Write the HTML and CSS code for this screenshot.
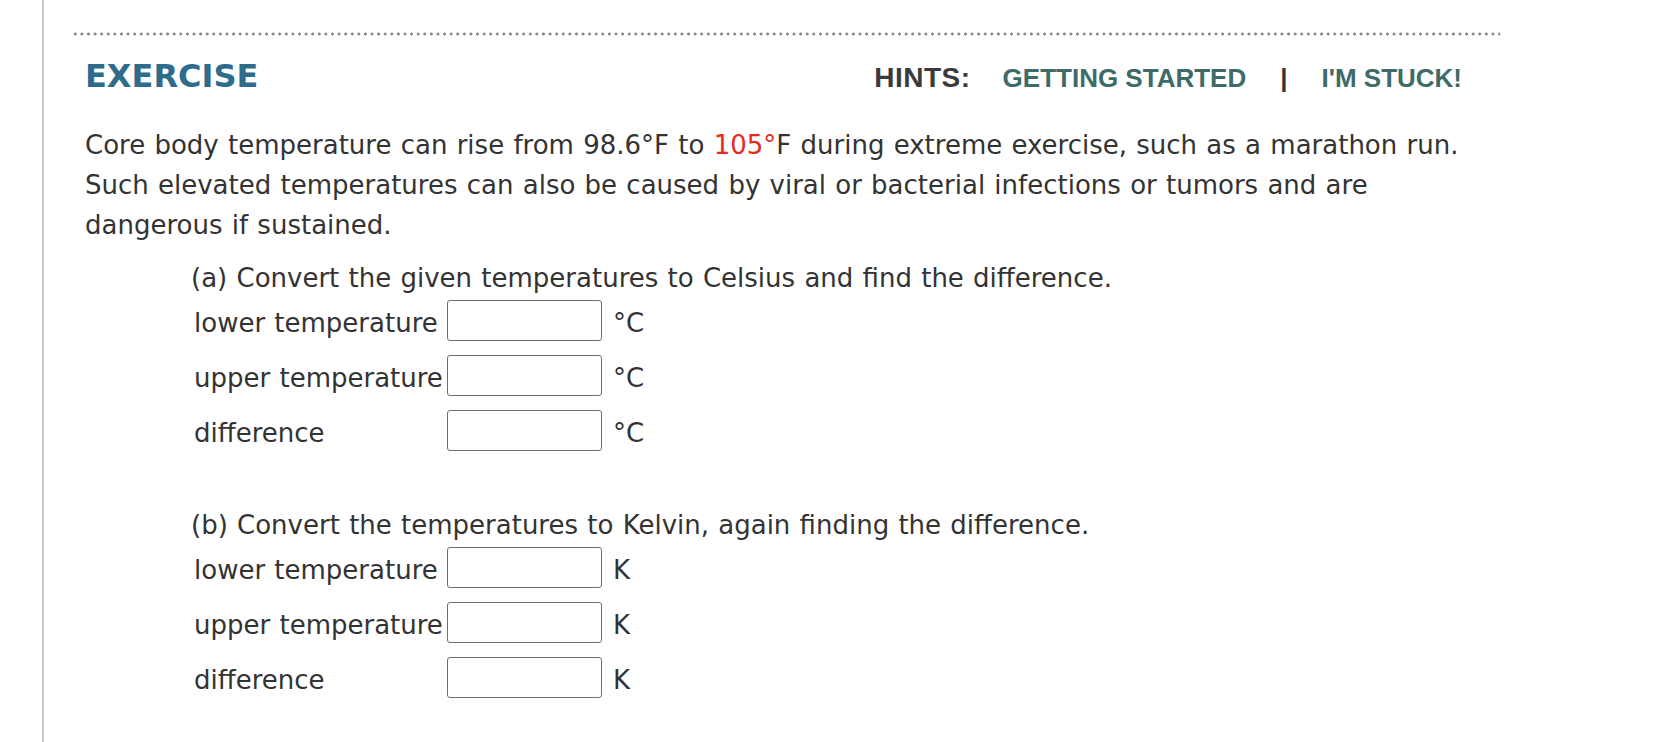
FILE: index.html
```html
<!DOCTYPE html>
<html lang="en">
<head>
<meta charset="utf-8">
<title>Exercise</title>
<link rel="stylesheet" href="styles.css">
</head>
<body>
<div class="page">
  <div class="rule"></div>
  <div class="header">
    <h2 class="title">EXERCISE</h2>
    <div class="hints">
      <span class="hints-label">HINTS:</span>
      <a class="hint-link first" href="#">GETTING STARTED</a>
      <span class="sep">|</span>
      <a class="hint-link" href="#">I'M STUCK!</a>
    </div>
  </div>
  <p class="problem">Core body temperature can rise from 98.6°F to <span class="red">105°</span>F during extreme exercise, such as a marathon run. Such elevated temperatures can also be caused by viral or bacterial infections or tumors and are dangerous if sustained.</p>
  <div class="part">
    <p class="part-q">(a) Convert the given temperatures to Celsius and find the difference.</p>
    <div class="answers">
      <span class="label">lower temperature</span><input class="ans" type="text"><span class="unit">°C</span>
      <span class="label">upper temperature</span><input class="ans" type="text"><span class="unit">°C</span>
      <span class="label">difference</span><input class="ans" type="text"><span class="unit">°C</span>
    </div>
  </div>
  <div class="part">
    <p class="part-q">(b) Convert the temperatures to Kelvin, again finding the difference.</p>
    <div class="answers">
      <span class="label">lower temperature</span><input class="ans" type="text"><span class="unit">K</span>
      <span class="label">upper temperature</span><input class="ans" type="text"><span class="unit">K</span>
      <span class="label">difference</span><input class="ans" type="text"><span class="unit">K</span>
    </div>
  </div>
</div>
</body>
</html>
```
FILE: styles.css
```css
html, body {
  margin: 0;
  padding: 0;
  background: #ffffff;
}

body {
  font-family: "DejaVu Sans", Verdana, sans-serif;
  color: #333333;
  font-size: 26px;
  word-spacing: 1px;
}

.page {
  margin-left: 42px;
  border-left: 2px solid #cccccc;
  height: 742px;
  box-sizing: border-box;
  padding: 32px 0 0 28px;
  overflow: hidden;
}

.rule {
  width: 1428px;
  height: 4px;
  background-image: radial-gradient(circle at center, #8a8a8a 0, #8a8a8a 1.3px, rgba(138,138,138,0) 1.8px);
  background-size: 6.6px 4px;
  background-repeat: repeat-x;
}

.header {
  display: flex;
  align-items: baseline;
  justify-content: space-between;
  width: 1428px;
  box-sizing: border-box;
  padding: 0 38px 0 13px;
  margin-top: 20px;
  height: 40px;
  word-spacing: 0;
}

.title {
  margin: 0;
  font: bold 32px/40px "DejaVu Sans", Verdana, sans-serif;
  color: #2e6c8b;
}

.hints {
  display: flex;
  align-items: baseline;
  gap: 34px;
  font: bold 26px/40px "Liberation Sans", Arial, sans-serif;
}

.hints-label {
  color: #3a3a3a;
  font-size: 28px;
  letter-spacing: 0.5px;
  margin-right: -2px;
}

.hint-link {
  color: #3e6a68;
  text-decoration: none;
}

.sep {
  color: #333333;
}

.problem {
  margin: 29px 0 0 13px;
  width: 1395px;
  line-height: 40px;
}

.red {
  color: #e8291c;
}

.part {
  margin-left: 119px;
}

.part + .part {
  margin-top: 46px;
}

.part-q {
  margin: 15px 0 0;
  line-height: 36px;
}

.answers {
  display: grid;
  grid-template-columns: 253px 155px auto;
  grid-auto-rows: 55px;
  align-items: start;
  margin-left: 3px;
}

.label {
  line-height: 54px;
  white-space: nowrap;
}

.ans {
  margin: 4px 0 0;
  width: 155px;
  height: 41px;
  box-sizing: border-box;
  border: 1.5px solid #6f6f6f;
  border-radius: 3px;
  padding: 0;
  background: #ffffff;
}

.unit {
  padding-left: 11px;
  line-height: 54px;
}
```
